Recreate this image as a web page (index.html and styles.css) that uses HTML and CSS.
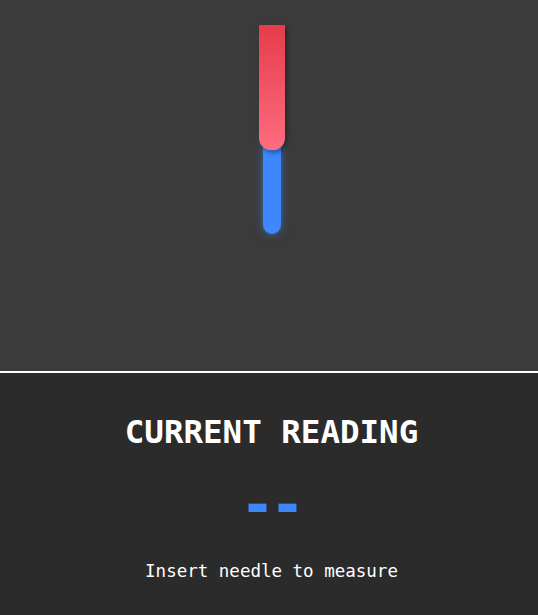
FILE: index.html
```html
<!DOCTYPE html>
<html>
<head>
<meta charset="utf-8">
<link rel="stylesheet" href="styles.css">
</head>
<body>
<div class="app">
  <section class="stage">
    <div class="probe">
      <div class="probe-head"></div>
      <div class="probe-needle"></div>
    </div>
  </section>
  <section class="readout">
    <h1 class="title">CURRENT READING</h1>
    <div class="value">--</div>
    <p class="hint">Insert needle to measure</p>
  </section>
</div>
</body>
</html>
```
FILE: styles.css
```css
html, body {
  margin: 0;
  padding: 0;
  height: 100%;
}
body {
  background: #2b2b2b;
  font-family: "DejaVu Sans Mono", monospace;
  color: #ffffff;
}
.app {
  display: flex;
  flex-direction: column;
  height: 615px;
}
.stage {
  height: 371px;
  background: #3b3b3b;
  border-bottom: 2px solid #ffffff;
  display: flex;
  justify-content: center;
  padding-left: 6px;
  box-sizing: content-box;
}
.probe {
  padding-top: 25px;
  display: flex;
  flex-direction: column;
  align-items: center;
}
.probe-head {
  position: relative;
  z-index: 2;
  width: 26px;
  height: 125px;
  background: linear-gradient(to bottom, #e63c4b, #fd6d80);
  border-radius: 0 0 12px 12px;
  box-shadow: 2px 3px 5px rgba(0, 0, 0, 0.35);
}
.probe-needle {
  position: relative;
  z-index: 1;
  margin-top: -12px;
  width: 18px;
  height: 96px;
  background: #3d88ff;
  border-radius: 0 0 9px 9px;
  box-shadow: 0 0 10px rgba(61, 136, 255, 0.55);
}
.readout {
  flex: 1;
  display: flex;
  flex-direction: column;
  align-items: center;
  padding-left: 5px;
  background: #2b2b2b;
}
.title {
  margin: 41px 0 0;
  font-size: 32.5px;
  font-weight: bold;
  line-height: 37px;
  letter-spacing: 0;
}
.value {
  margin-top: 22px;
  padding-right: 3px;
  font-size: 58px;
  font-weight: bold;
  line-height: 64px;
  letter-spacing: -5px;
  color: #3d88ff;
}
.hint {
  margin: 24px 0 0;
  font-size: 17.5px;
  line-height: 20px;
}
```
